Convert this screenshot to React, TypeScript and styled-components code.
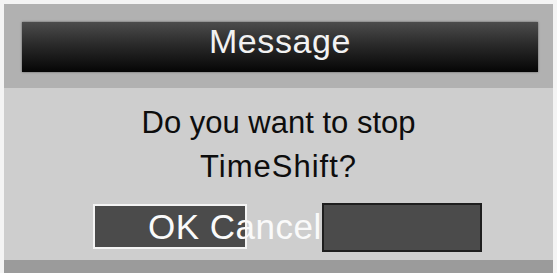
import React from "react";
import styled, { createGlobalStyle } from "styled-components";

const Global = createGlobalStyle`
  html, body { margin: 0; padding: 0; background: #f4f4f4; }
  body { font-family: "Liberation Sans", Arial, sans-serif; }
`;

const Frame = styled.div`
  width: 557px;
  height: 273px;
  box-sizing: border-box;
  padding: 4px 4px 0 4px;
  display: flex;
  flex-direction: column;
  overflow: hidden;
`;

const Header = styled.div`
  background: #b1b1b1;
  padding: 18px 15px 16px 18px;
`;

const TitleBar = styled.div`
  height: 50px;
  background: linear-gradient(#4c4c4c 0%, #2a2a2a 45%, #050505 100%);
  color: #f2f2f2;
  font-size: 34px;
  letter-spacing: 0.6px;
  line-height: 38px;
  text-align: center;
  box-shadow: 0 0 2px rgba(0, 0, 0, 0.5);
`;

const Body = styled.div`
  flex: 1;
  background: #cecece;
  padding-top: 13px;
  display: flex;
  flex-direction: column;
  align-items: center;
`;

const Text = styled.div<{ $spacing?: number }>`
  font-size: 31px;
  line-height: 44px;
  letter-spacing: ${(p) => p.$spacing ?? 0}px;
  color: #0d0d0d;
  text-align: center;
`;

const Buttons = styled.div`
  margin-top: 14px;
  align-self: stretch;
  display: flex;
  align-items: flex-start;
  padding-left: 89px;
  gap: 75px;
`;

const Button = styled.div<{ $focused?: boolean; $w: number; $h: number; $top?: number }>`
  box-sizing: border-box;
  width: ${(p) => p.$w}px;
  height: ${(p) => p.$h}px;
  margin-top: ${(p) => p.$top ?? 0}px;
  background: #4b4b4b;
  border: 2px solid ${(p) => (p.$focused ? "#f4f4f4" : "#1e1e1e")};
  display: flex;
  align-items: center;
  color: #fafafa;
  font-size: 35px;
  letter-spacing: 0.5px;
  line-height: 35px;
  white-space: nowrap;
  overflow: visible;
  position: relative;
  z-index: ${(p) => (p.$focused ? 1 : 0)};
`;

const Label = styled.span`
  padding-left: 53px;
`;

const Footer = styled.div`
  height: 13px;
  background: #9b9b9b;
`;

export default function App() {
  return (
    <>
      <Global />
      <Frame>
        <Header>
          <TitleBar>Message</TitleBar>
        </Header>
        <Body>
          <Text>Do you want to stop</Text>
          <Text $spacing={1}>TimeShift?</Text>
          <Buttons>
            <Button $focused $w={154} $h={45} $top={1}>
              <Label>OK Cancel</Label>
            </Button>
            <Button $w={160} $h={49} />
          </Buttons>
        </Body>
        <Footer />
      </Frame>
    </>
  );
}
